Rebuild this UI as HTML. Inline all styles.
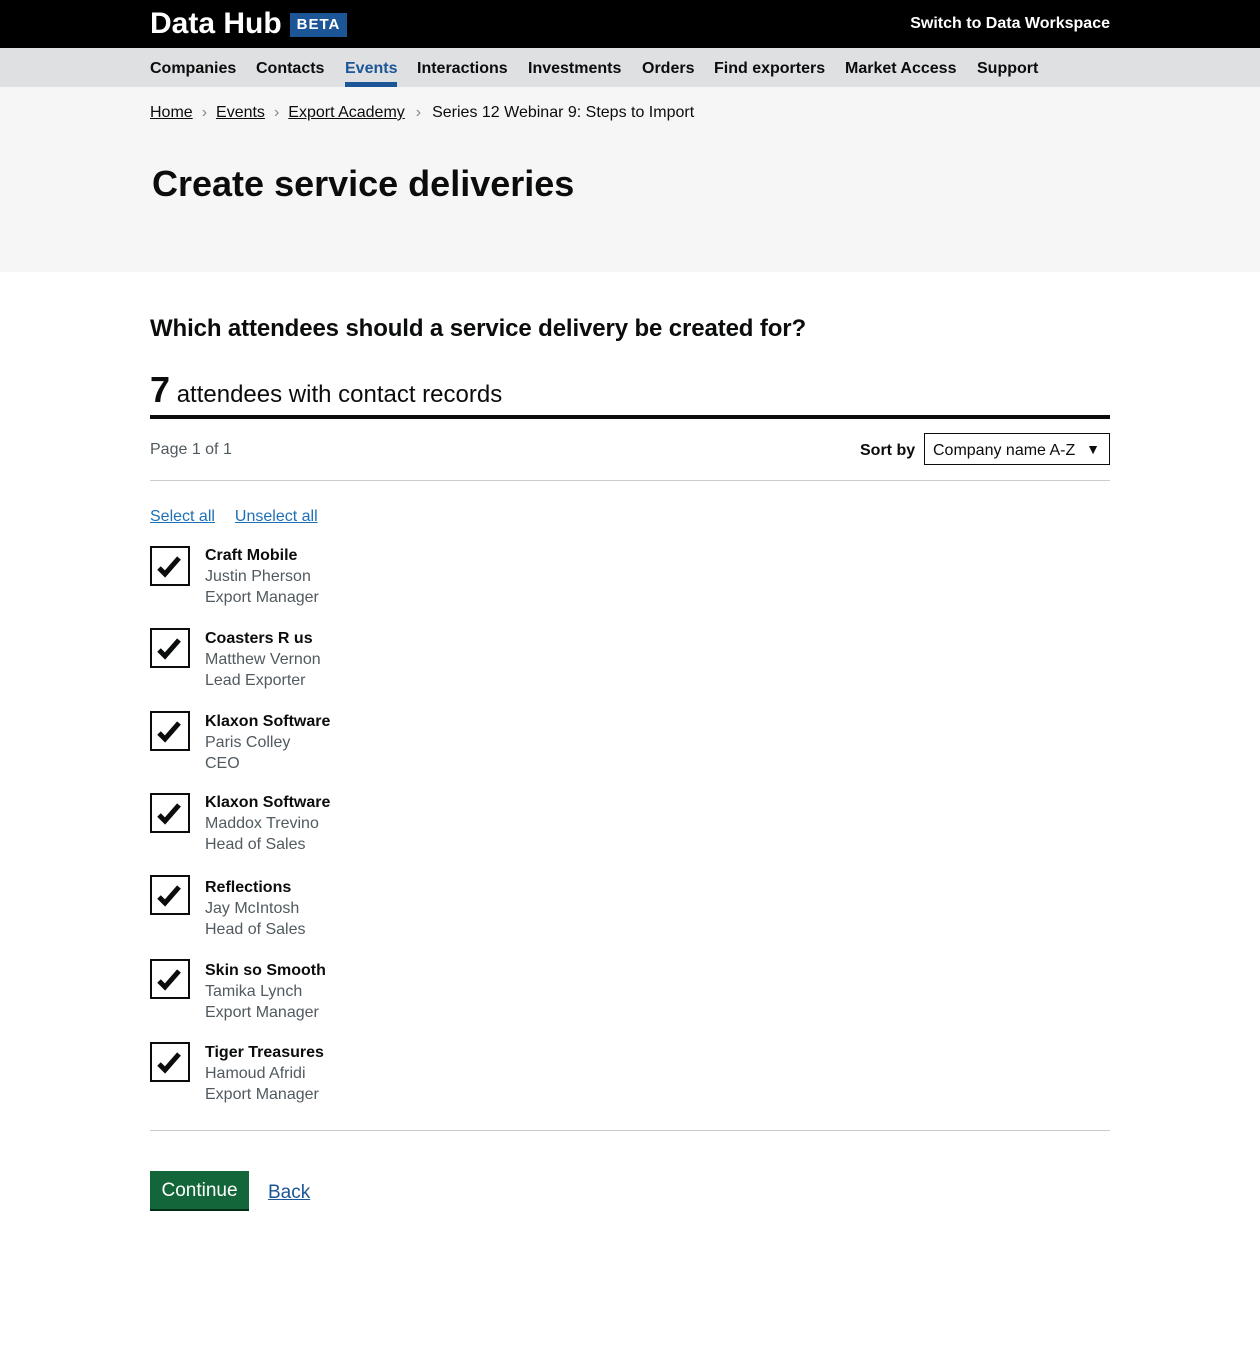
<!DOCTYPE html>
<html><head><meta charset="utf-8"><style>
*{margin:0;padding:0;box-sizing:border-box}
body{width:1260px;height:1351px;font-family:"Liberation Sans",Arial,sans-serif;color:#0b0c0c;background:#fff;position:relative}
.a{position:absolute;white-space:nowrap}
a{color:#1d70b8;text-decoration:underline}
.nav span{position:absolute;top:60px;font-size:16px;font-weight:bold}
.cb{position:absolute;left:150px;width:40px;height:40px;border:2px solid #0b0c0c}
.cb svg{position:absolute;left:0;top:0}
.it{position:absolute;left:205px;font-size:16px;line-height:21px;color:#505a5f}
.it b{color:#0b0c0c}
</style></head><body>
<div class="a" style="left:0;top:0;width:1260px;height:48px;background:#000"></div>
<div class="a" style="left:150px;top:6px;color:#fff;font-size:30px;font-weight:bold;line-height:36px">Data Hub</div>
<div class="a" style="left:290px;top:13px;width:57px;height:24px;background:#1d5696;color:#fff;font-size:15px;font-weight:bold;text-align:center;line-height:24px;letter-spacing:1px">BETA</div>
<div class="a" style="right:150px;top:15px;color:#fff;font-size:16px;font-weight:bold">Switch to Data Workspace</div>
<div class="a" style="left:0;top:48px;width:1260px;height:39px;background:#dee0e2"></div>
<div class="nav">
<span style="left:150px">Companies</span><span style="left:256px">Contacts</span><span style="left:345px;color:#1d5696">Events</span><span style="left:417px">Interactions</span><span style="left:528px">Investments</span><span style="left:642px">Orders</span><span style="left:714px">Find exporters</span><span style="left:845px">Market Access</span><span style="left:977px">Support</span>
</div>
<div class="a" style="left:345px;top:82px;width:52px;height:5px;background:#1d5696"></div>
<div class="a" style="left:0;top:87px;width:1260px;height:185px;background:#f6f6f6"></div>
<div class="a" style="left:150px;top:104px;font-size:16px;color:#0b0c0c"><a style="color:#0b0c0c">Home</a><span style="color:#888;margin:0 9px">›</span><a style="color:#0b0c0c">Events</a><span style="color:#888;margin:0 9px">›</span><a style="color:#0b0c0c">Export Academy</a><span style="color:#888;margin:0 11px">›</span>Series 12 Webinar 9: Steps to Import</div>
<div class="a" style="left:152px;top:163px;font-size:36px;font-weight:bold">Create service deliveries</div>
<div class="a" style="left:150px;top:315px;font-size:24px;font-weight:bold;letter-spacing:-0.12px">Which attendees should a service delivery be created for?</div>
<div class="a" style="left:150px;top:369px;font-size:24px"><b style="font-size:36px">7</b> attendees with contact records</div>
<div class="a" style="left:150px;top:415px;width:960px;height:4px;background:#0b0c0c"></div>
<div class="a" style="left:150px;top:441px;font-size:16px;color:#505a5f">Page 1 of 1</div>
<div class="a" style="left:860px;top:442px;font-size:16px;font-weight:bold">Sort by</div>
<div class="a" style="left:924px;top:433px;width:186px;height:32px;border:1px solid #0b0c0c;font-size:16px;padding:8px 8px">Company name A-Z<span style="position:absolute;right:9px;top:7px;font-size:14px">▼</span></div>
<div class="a" style="left:150px;top:480px;width:960px;height:1px;background:#ccc"></div>
<div class="a" style="left:150px;top:508px;font-size:16px"><a>Select all</a><a style="margin-left:20px">Unselect all</a></div>

<div class="cb" style="top:546px"><svg width="36" height="36"><path d="M7 20 L13 26 L27 10" stroke="#0b0c0c" stroke-width="5" fill="none"/></svg></div>
<div class="it" style="top:545px"><b>Craft Mobile</b><br>Justin Pherson<br>Export Manager</div>
<div class="cb" style="top:628px"><svg width="36" height="36"><path d="M7 20 L13 26 L27 10" stroke="#0b0c0c" stroke-width="5" fill="none"/></svg></div>
<div class="it" style="top:628px"><b>Coasters R us</b><br>Matthew Vernon<br>Lead Exporter</div>
<div class="cb" style="top:711px"><svg width="36" height="36"><path d="M7 20 L13 26 L27 10" stroke="#0b0c0c" stroke-width="5" fill="none"/></svg></div>
<div class="it" style="top:711px"><b>Klaxon Software</b><br>Paris Colley<br>CEO</div>
<div class="cb" style="top:793px"><svg width="36" height="36"><path d="M7 20 L13 26 L27 10" stroke="#0b0c0c" stroke-width="5" fill="none"/></svg></div>
<div class="it" style="top:792px"><b>Klaxon Software</b><br>Maddox Trevino<br>Head of Sales</div>
<div class="cb" style="top:875px"><svg width="36" height="36"><path d="M7 20 L13 26 L27 10" stroke="#0b0c0c" stroke-width="5" fill="none"/></svg></div>
<div class="it" style="top:877px"><b>Reflections</b><br>Jay McIntosh<br>Head of Sales</div>
<div class="cb" style="top:959px"><svg width="36" height="36"><path d="M7 20 L13 26 L27 10" stroke="#0b0c0c" stroke-width="5" fill="none"/></svg></div>
<div class="it" style="top:960px"><b>Skin so Smooth</b><br>Tamika Lynch<br>Export Manager</div>
<div class="cb" style="top:1042px"><svg width="36" height="36"><path d="M7 20 L13 26 L27 10" stroke="#0b0c0c" stroke-width="5" fill="none"/></svg></div>
<div class="it" style="top:1042px"><b>Tiger Treasures</b><br>Hamoud Afridi<br>Export Manager</div>

<div class="a" style="left:150px;top:1130px;width:960px;height:1px;background:#ccc"></div>
<div class="a" style="left:150px;top:1171px;width:99px;height:40px;background:#136639;border-bottom:2px solid #002d18;color:#fff;font-size:19px;text-align:center;line-height:40px">Continue</div>
<div class="a" style="left:268px;top:1182px;font-size:19px"><a style="color:#1d5696">Back</a></div>
</body></html>
